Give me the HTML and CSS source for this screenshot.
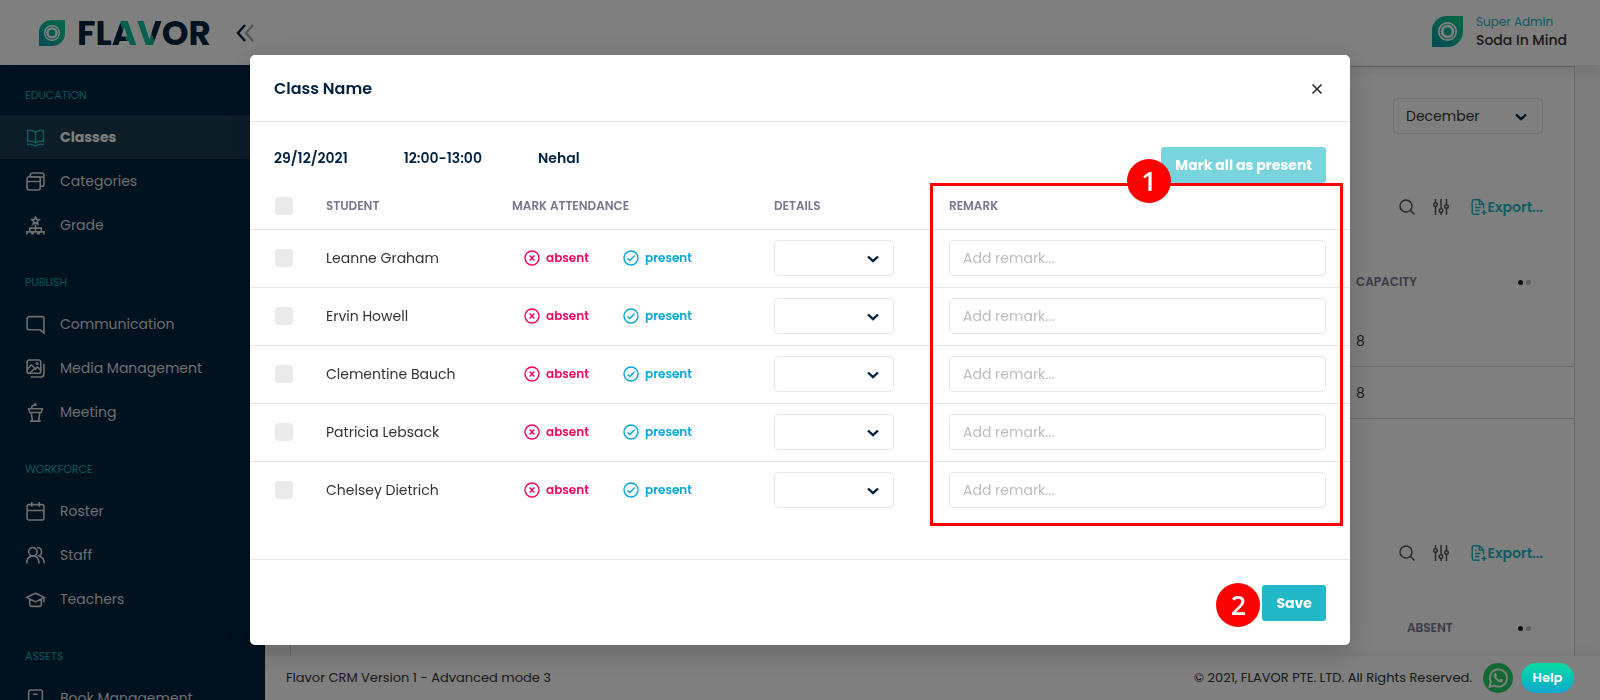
FILE: index.html
```html
<!DOCTYPE html>
<html lang="en">
<head>
<meta charset="utf-8">
<title>Flavor CRM - Classes</title>
<link rel="stylesheet" href="styles.css">
</head>
<body>
<svg class="defs" aria-hidden="true">
  <defs>
    <linearGradient id="leaf" x1="1" y1="0" x2="0" y2="1"><stop offset="0" stop-color="#08d48c"/><stop offset=".5" stop-color="#08b8a0"/><stop offset="1" stop-color="#0894a8"/></linearGradient>
    <symbol id="mark" viewBox="0 0 32 32"><path d="M15 0H32V16A16 16 0 0 1 16 32H0V15A15 15 0 0 1 15 0Z" fill="url(#leaf)"/><circle cx="16" cy="16" r="9" fill="none" stroke="#fff" stroke-width="1.8"/><circle cx="16" cy="16" r="5.6" fill="none" stroke="#fff" stroke-width="3"/></symbol>
    <symbol id="down" viewBox="0 0 12 8"><path d="M1 1.500 6 6.200 11 1.500" fill="none" stroke="currentColor" stroke-width="2.4"/></symbol>
    <symbol id="search" viewBox="0 0 16 16"><circle cx="7" cy="7" r="6"/><path d="m11.500 11.500 4 4"/></symbol>
    <symbol id="sliders" viewBox="0 0 16 16"><path d="M2.500 0v3.500m0 4V16M8 0v9.500m0 4V16M13.500 0v5.500m0 4V16"/><circle cx="2.500" cy="5.500" r="1.800"/><circle cx="8" cy="11.500" r="1.800"/><circle cx="13.500" cy="7.500" r="1.800"/></symbol>
    <symbol id="export" viewBox="0 0 16 16"><path d="M8.500 15.200H3A1.800 1.800 0 0 1 1.200 13.500V2.500A1.800 1.800 0 0 1 3 .8H8.500L12.500 5V9.500M8.200 1V5.200H12.300M4 5.500H5.500M4 8.500H9.500M4 11.500H8.500M13 11V16M10.500 13.500H15.500"/></symbol>
    <symbol id="absent" viewBox="0 0 16 16"><circle cx="8" cy="8" r="7"/><path d="m5.600 5.600 4.800 4.800m0-4.800-4.800 4.800"/></symbol>
    <symbol id="present" viewBox="0 0 16 16"><circle cx="8" cy="8" r="7"/><path d="m4.500 8.400 2.300 2.200 4.700-4.900"/></symbol>
  </defs>
</svg>

<div class="app">
  <header class="topbar">
    <a class="brand" href="#" aria-label="Flavor home">
      <svg class="brand-mark"><use href="#mark"/></svg>
      <span class="brand-name">FL<span class="tint-a">A</span><span class="tint-v">V</span>OR</span>
    </a>
    <button class="collapse" type="button" aria-label="Collapse menu">
      <svg viewBox="0 0 18 18"><path d="M9 1 2 9l7 8" stroke="#002240"/><path d="M17 1l-7 8 7 8" stroke="#a9adb3"/></svg>
    </button>
    <div class="account">
      <svg class="account-mark"><use href="#mark"/></svg>
      <div><div class="role">Super Admin</div><div class="person">Soda In Mind</div></div>
    </div>
  </header>

  <div class="columns">
    <nav class="sidebar">
      <section class="group">
        <h2>EDUCATION</h2>
        <a class="active" href="#"><svg viewBox="0 0 18 18"><path d="M9 4C7 2.400 5 2 1.500 2.200V12.500C5 12.300 7 12.700 9 14c2-1.300 4-1.700 7.500-1.500V2.200C13 2 11 2.400 9 4ZV14M1 15.500c3-.3 5 0 6.500.9q1.500 1 3 0C12 15.500 14 15.200 17 15.500"/></svg>Classes</a>
        <a href="#"><svg viewBox="0 0 18 18"><rect x="1" y="4.500" width="12.500" height="12.500" rx="2"/><path d="M1 9H13.500M4 4.500V3a2 2 0 0 1 2-2h9a2 2 0 0 1 2 2v8.500a2 2 0 0 1-2 2h-1.500M4 4.800H17"/></svg>Categories</a>
        <a href="#"><svg viewBox="0 0 18 18"><path d="m9 1 1.100 2.200 2.400.3-1.800 1.700.5 2.400L9 6.400 6.800 7.600l.5-2.400-1.800-1.700 2.400-.3ZM9 8V14.500M3.500 14.500v-3h11v3M1 17.500v-2.500h4.500v2.500M12.500 17.500v-2.500h4.500v2.500M7 17.500v-2.500h4v2.500"/></svg>Grade</a>
      </section>
      <section class="group">
        <h2>PUBLISH</h2>
        <a href="#"><svg viewBox="0 0 18 18"><path d="M3 1.500H15.500A1.500 1.500 0 0 1 17 3V17l-3.500-3H3a2 2 0 0 1-2-2V3.500a2 2 0 0 1 2-2Z"/></svg>Communication</a>
        <a href="#"><svg viewBox="0 0 18 18"><rect x="1" y="1" width="13" height="12.500" rx="2"/><path d="m1 10 4-4.500 4 4 2-2 3 3M4 13l5-5M17 4.500V14a3 3 0 0 1-3 3H4.500"/><circle cx="10.500" cy="4.300" r=".7"/></svg>Media Management</a>
        <a href="#"><svg viewBox="0 0 18 18"><path d="M2.500 5.500H15.500L14.500 9H3.500ZM5 9l1 8m7-8-1 8M4 17.200H14M5.500 5.500C5 3 6 2 8.500 2"/><path d="M7.500 1.500H10" stroke-width="2.500"/></svg>Meeting</a>
      </section>
      <section class="group">
        <h2>WORKFORCE</h2>
        <a href="#"><svg viewBox="0 0 18 18"><rect x="1" y="2.500" width="16" height="14.500" rx="1.500"/><path d="M1 8H17M5.500 0V4.500M12.500 0V4.500"/></svg>Roster</a>
        <a href="#"><svg viewBox="0 0 18 18"><circle cx="6.500" cy="5.500" r="4"/><path d="M.7 16.500C.7 12 3 9.500 6.500 9.500s5.800 2.500 5.800 7M10.500 1.700c5-.8 5.500 6 1.800 7.500 3 1 5 3.500 5 7.300"/></svg>Staff</a>
        <a href="#"><svg viewBox="0 0 18 18"><path d="M9 3 .8 7 9 11.300 17.200 7ZM3.500 8.500V14q0 1.500 1.500 1.500H13q1.500 0 1.500-1.500V8.500M17 7v4.500"/></svg>Teachers</a>
      </section>
      <section class="group">
        <h2>ASSETS</h2>
        <a href="#"><svg viewBox="0 0 18 18"><path d="M15.500 17V2.500A1.500 1.500 0 0 0 14 1H4.500A2 2 0 0 0 2.500 3V15a2 2 0 0 0 2 2H15.500M2.500 13H15.500M6.500 5H11"/></svg>Book Management</a>
      </section>
    </nav>

    <div class="content">
      <main class="card">
        <div class="filters">
          <label class="select month"><select aria-label="Month"><option>December</option></select><svg><use href="#down"/></svg></label>
        </div>
        <div class="toolbar">
          <button type="button" aria-label="Search"><svg><use href="#search"/></svg></button>
          <button type="button" aria-label="Filters"><svg><use href="#sliders"/></svg></button>
          <button class="export" type="button"><svg><use href="#export"/></svg>Export...</button>
        </div>
        <table class="listing">
          <colgroup><col><col class="w-capacity"><col class="w-dots"></colgroup>
          <tr><th></th><th>CAPACITY</th><th><span class="dots"><i></i><i></i></span></th></tr>
          <tr><td></td><td>8</td><td></td></tr>
          <tr><td></td><td>8</td><td></td></tr>
        </table>
        <div class="toolbar lower">
          <button type="button" aria-label="Search"><svg><use href="#search"/></svg></button>
          <button type="button" aria-label="Filters"><svg><use href="#sliders"/></svg></button>
          <button class="export" type="button"><svg><use href="#export"/></svg>Export...</button>
        </div>
        <table class="listing">
          <colgroup><col><col class="w-absent"><col class="w-dots"></colgroup>
          <tr><th></th><th>ABSENT</th><th><span class="dots"><i></i><i></i></span></th></tr>
        </table>
      </main>
      <footer class="footer">
        <span>Flavor CRM Version 1 - Advanced mode 3</span>
        <span class="legal">© 2021, FLAVOR PTE. LTD. All Rights Reserved.</span>
        <a class="chat" href="#" aria-label="WhatsApp"><svg viewBox="0 0 30 30"><circle cx="15" cy="15" r="15" fill="#25d366"/><path d="M6.500 23.800 7.800 19A8.600 8.600 0 1 1 11.200 22.500Z" fill="none" stroke="#fff" stroke-width="1.900"/><path d="M11.800 10.300c.5-.5 1.200-.4 1.400.1l.8 1.800c.1.400-.7 1.100-.9 1.500.8 1.600 2 2.600 3.500 3.200.4-.3.900-1.300 1.300-1.200l1.800.9c.7.400 0 2-.8 2.400-1.200.6-3.200.1-5.200-1.500-2.200-1.800-3.300-3.900-3.100-5.300.1-.8.600-1.400 1.200-1.900Z" fill="#fff"/></svg></a>
      </footer>
    </div>
  </div>
</div>
<button class="help" type="button">Help</button>

<div class="backdrop">
  <div class="modal" role="dialog" aria-labelledby="modal-title">
    <div class="modal-head">
      <h1 id="modal-title">Class Name</h1>
      <button class="close" type="button" aria-label="Close"><svg viewBox="0 0 10 10"><path d="m.5.5 9 9m0-9-9 9"/></svg></button>
    </div>
    <div class="modal-body">
      <div class="summary">
        <span>29/12/2021</span><span>12:00-13:00</span><span>Nehal</span>
        <button class="primary muted" type="button">Mark all as present</button>
      </div>
      <table class="students">
        <colgroup><col class="w-check"><col class="w-name"><col class="w-mark"><col class="w-detail"><col></colgroup>
        <thead><tr><th><input type="checkbox" aria-label="Select all"></th><th>STUDENT</th><th>MARK ATTENDANCE</th><th>DETAILS</th><th>REMARK</th></tr></thead>
        <tbody>
          <tr><td><input type="checkbox" aria-label="Select Leanne Graham"></td><td>Leanne Graham</td><td><div class="marks"><button class="absent" type="button"><svg><use href="#absent"/></svg>absent</button><button class="present" type="button"><svg><use href="#present"/></svg>present</button></div></td><td><label class="select"><select aria-label="Details"><option></option></select><svg><use href="#down"/></svg></label></td><td><input class="remark" type="text" placeholder="Add remark..." aria-label="Remark"></td></tr>
          <tr><td><input type="checkbox" aria-label="Select Ervin Howell"></td><td>Ervin Howell</td><td><div class="marks"><button class="absent" type="button"><svg><use href="#absent"/></svg>absent</button><button class="present" type="button"><svg><use href="#present"/></svg>present</button></div></td><td><label class="select"><select aria-label="Details"><option></option></select><svg><use href="#down"/></svg></label></td><td><input class="remark" type="text" placeholder="Add remark..." aria-label="Remark"></td></tr>
          <tr><td><input type="checkbox" aria-label="Select Clementine Bauch"></td><td>Clementine Bauch</td><td><div class="marks"><button class="absent" type="button"><svg><use href="#absent"/></svg>absent</button><button class="present" type="button"><svg><use href="#present"/></svg>present</button></div></td><td><label class="select"><select aria-label="Details"><option></option></select><svg><use href="#down"/></svg></label></td><td><input class="remark" type="text" placeholder="Add remark..." aria-label="Remark"></td></tr>
          <tr><td><input type="checkbox" aria-label="Select Patricia Lebsack"></td><td>Patricia Lebsack</td><td><div class="marks"><button class="absent" type="button"><svg><use href="#absent"/></svg>absent</button><button class="present" type="button"><svg><use href="#present"/></svg>present</button></div></td><td><label class="select"><select aria-label="Details"><option></option></select><svg><use href="#down"/></svg></label></td><td><input class="remark" type="text" placeholder="Add remark..." aria-label="Remark"></td></tr>
          <tr><td><input type="checkbox" aria-label="Select Chelsey Dietrich"></td><td>Chelsey Dietrich</td><td><div class="marks"><button class="absent" type="button"><svg><use href="#absent"/></svg>absent</button><button class="present" type="button"><svg><use href="#present"/></svg>present</button></div></td><td><label class="select"><select aria-label="Details"><option></option></select><svg><use href="#down"/></svg></label></td><td><input class="remark" type="text" placeholder="Add remark..." aria-label="Remark"></td></tr>
        </tbody>
      </table>
      <div class="callout"><span class="step step-one">1</span></div>
    </div>
    <div class="modal-foot">
      <span class="step step-two">2</span>
      <button class="primary" type="button">Save</button>
    </div>
  </div>
</div>
</body>
</html>
```

FILE: styles.css
```css
* { box-sizing: border-box; }
body { margin: 0; overflow: hidden; font: 400 14px/24px Poppins, Inter, "Open Sans", sans-serif; color: #333; }
h1, h2 { margin: 0; }
a { color: inherit; text-decoration: none; }
button { border: 0; padding: 0; background: none; color: inherit; font: inherit; cursor: pointer; }
table { width: 100%; border-collapse: separate; border-spacing: 0; table-layout: fixed; }
th, td { padding: 0; text-align: left; }
th { font-size: 12px; font-weight: 600; color: #7a768e; }
.defs { position: absolute; width: 0; height: 0; }

.app { display: flex; flex-direction: column; height: 100vh; }
.topbar { display: flex; align-items: center; height: 65px; flex: none; padding: 0 33px 0 39px; background: #fff; box-shadow: 0 2px 16px rgba(0, 0, 0, .12); z-index: 1; }
.brand { display: flex; align-items: center; gap: 12px; }
.brand-mark { width: 26px; height: 26px; }
.brand-name { width: 144px; font: 700 34px/40px Poppins, sans-serif; color: #002240; }
.tint-a, .tint-v { color: transparent; background-clip: text; -webkit-background-clip: text; }
.tint-a { background-image: linear-gradient(70deg, #002240 48%, #08bf9c 49%); }
.tint-v { background-image: linear-gradient(70deg, #08bf9c 54%, #002240 55%); }
.collapse { width: 18px; height: 18px; margin-left: 15px; }
.collapse svg { display: block; fill: none; stroke-width: 2.4; }
.account { display: flex; gap: 13px; margin-left: auto; padding-bottom: 3px; line-height: 19px; }
.account-mark { width: 31px; height: 31px; margin-top: 4px; }
.role { font-size: 12px; color: #22b8c8; }
.person { font-size: 14px; font-weight: 500; }

.columns { display: flex; flex: 1; min-height: 0; }
.sidebar { width: 265px; flex: none; padding-top: 22px; background: #002240; color: #dcdcdc; overflow: hidden; }
.group { padding-bottom: 27px; }
.group h2 { padding: 0 25px 12px; font-size: 11px; line-height: 16px; font-weight: 400; color: #1bb0b8; }
.group a { display: flex; align-items: center; gap: 15px; height: 44px; padding-left: 26px; }
.group svg { width: 19px; height: 19px; fill: none; stroke: currentColor; stroke-width: 1.5; overflow: visible; }
.group .active { background: #193b50; color: #fff; font-weight: 700; }
.group .active svg { color: #1bb0b8; }
.content { display: flex; flex-direction: column; flex: 1; min-width: 0; background: #fafafa; }
.card { flex: 1; min-height: 0; overflow: hidden; margin: 1px 25px 0; border: 1px solid #d5d5d8; border-bottom: 0; background: #fff; }
.filters { display: flex; justify-content: flex-end; padding: 31px 31px 61px; }
.toolbar { display: flex; justify-content: flex-end; align-items: center; gap: 18px; padding: 0 31px; height: 24px; margin-bottom: 30px; color: #555; }
.toolbar.lower { margin-top: 122px; }
.toolbar svg { display: block; width: 16px; height: 16px; fill: none; stroke: currentColor; stroke-width: 1.5; }
.toolbar .export { display: flex; align-items: center; gap: 1px; margin-left: 4px; color: #22b8c8; font-weight: 600; }
.listing th { height: 66px; }
.listing td { height: 52px; border-bottom: 1px solid #d5d5d8; }
.w-capacity { width: 162px; }
.w-absent { width: 111px; }
.w-dots { width: 56px; }
.dots { display: flex; gap: 3px; }
.dots i { width: 5px; height: 5px; border-radius: 50%; background: #222; }
.dots i + i { background: #c0c0c0; }
.footer { display: flex; align-items: center; height: 44px; flex: none; padding: 0 87px 0 21px; background: #fff; font-size: 13px; z-index: 1; box-shadow: 0 -2px 12px rgba(0, 0, 0, .06); }
.legal { margin-left: auto; }
.chat { margin-left: 11px; }
.chat svg { display: block; width: 30px; height: 30px; }
.help { position: fixed; right: 26px; bottom: 7px; z-index: 3; width: 53px; height: 30px; border-radius: 15px; background: linear-gradient(#06dca0, #10a8d0); color: #fff; font-size: 13px; font-weight: 600; }

.select { position: relative; display: block; width: 120px; color: #002240; }
.select select { display: block; width: 100%; height: 36px; padding: 0 12px; border: 1px solid #e6e6e8; border-radius: 4px; background: none; appearance: none; font: inherit; color: #333; }
.select svg { position: absolute; right: 15px; top: 15px; width: 12px; height: 8px; pointer-events: none; }
.select.month { width: 150px; }
.month svg { right: 16px; }

.backdrop { position: fixed; inset: 0; z-index: 2; padding: 55px 24px; background: rgba(0, 0, 0, .5); }
.modal { max-width: 1100px; margin: 0 auto; border-radius: 5px; background: #fff; box-shadow: 0 6px 28px rgba(0, 0, 0, .2); }
.modal-head { display: flex; align-items: center; justify-content: space-between; height: 67px; padding: 1px 28px 0 24px; border-bottom: 1px solid #e6e6e8; color: #002240; }
.modal-head h1 { font-size: 16px; font-weight: 600; }
.close { width: 10px; }
.close svg { display: block; width: 10px; height: 10px; fill: none; stroke: #222; stroke-width: 1.5; overflow: visible; }
.modal-body { position: relative; padding: 25px 0 39px; border-bottom: 1px solid #e6e6e8; }
.summary { display: flex; gap: 56px; padding: 0 24px; font-weight: 600; line-height: 23px; color: #002240; }
.primary { height: 36px; padding: 0 14px; border-radius: 3px; background: #22b8c8; color: #fff; font-weight: 700; }
.primary.muted { margin-left: auto; background: #7ad4de; }
.students th { height: 47px; border-bottom: 1px solid #e6e6e8; }
.students td { height: 58px; padding-bottom: 1px; border-bottom: 1px solid #e6e6e8; }
.students tr:last-child td { border-bottom-color: transparent; }
.students thead tr:last-child th { border-bottom-color: #e6e6e8; }
.students th:first-child, .students td:first-child { padding-left: 25px; }
.students th:last-child, .students td:last-child { padding-right: 24px; }
.w-check { width: 76px; }
.w-name { width: 186px; }
.w-mark { width: 262px; }
.w-detail { width: 175px; }
input[type="checkbox"] { display: block; width: 18px; height: 18px; margin: 0; border-radius: 4px; background: #eaeaea; appearance: none; }
.marks { display: flex; padding-left: 12px; font-size: 12px; font-weight: 600; }
.marks button { display: flex; align-items: center; gap: 6px; width: 99px; }
.marks svg { width: 16px; height: 16px; fill: none; stroke: currentColor; stroke-width: 1.4; }
.absent { color: #f5055f; }
.present { color: #05a8d8; }
.remark { display: block; width: 100%; height: 36px; padding: 0 13px; border: 1px solid #e6e6e8; border-radius: 4px; font: inherit; color: #333; }
.remark::placeholder { color: #bdbdbd; }
.modal-foot { display: flex; justify-content: flex-end; align-items: center; gap: 2px; height: 85px; padding: 0 24px; }
.callout { position: absolute; left: 680px; right: 7px; top: 61px; bottom: 33px; border: 3px solid #f00; pointer-events: none; }
.step { width: 44px; height: 44px; border-radius: 50%; background: #f00; color: #fff; font: 600 27px/44px "Open Sans", sans-serif; text-align: center; }
.step-one { position: absolute; left: 194px; top: -27px; }
.step-two { margin-top: 4px; }
```
